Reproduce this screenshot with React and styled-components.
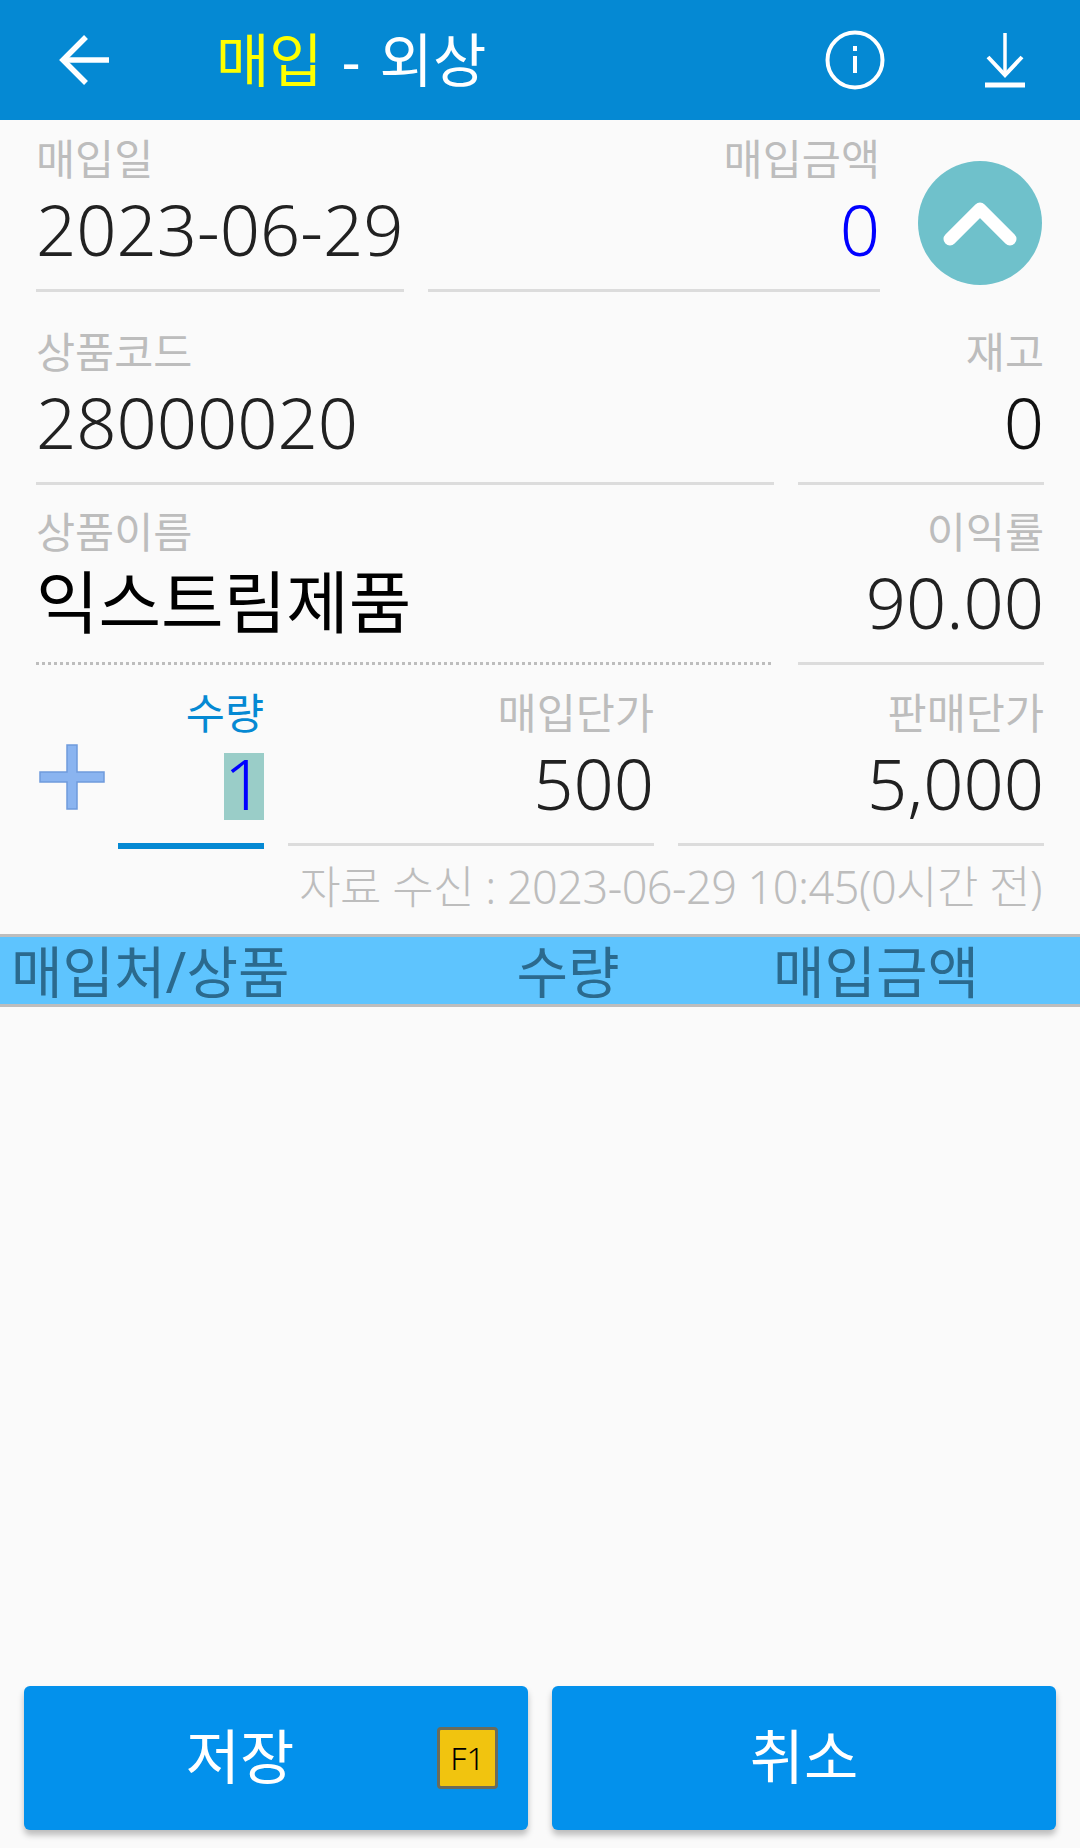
import styled, { createGlobalStyle } from "styled-components";

const GlobalStyle = createGlobalStyle`
  html, body {
    margin: 0;
    padding: 0;
    background: #fafafa;
  }

  body {
    font-family: "Noto Sans", "Noto Sans CJK KR", sans-serif;
  }
`;

const Page = styled.div`
  width: 1080px;
  height: 1848px;
  display: flex;
  flex-direction: column;
  background: #fafafa;
  overflow: hidden;
`;

const Header = styled.header`
  height: 120px;
  flex: none;
  display: flex;
  align-items: center;
  background: #0589d3;
  padding-left: 59px;
`;

const BackButton = styled.div`
  width: 52px;
  height: 52px;
  display: flex;
`;

const Title = styled.h1`
  margin: 0 0 0 105px;
  flex: 1;
  font-size: 58px;
  font-weight: 400;
  line-height: 120px;
  height: 120px;
  word-spacing: 4px;
  color: #fff;
`;

const TitleAccent = styled.span`
  color: #ffff00;
`;

const HeaderIcon = styled.div`
  width: 60px;
  height: 60px;
  display: flex;
  margin-right: ${(p) => p.$right}px;
`;

const Row = styled.div`
  display: flex;
  flex: none;
  gap: 24px;
  padding-left: 36px;
  margin-top: ${(p) => p.$top}px;
`;

const Field = styled.div`
  width: ${(p) => p.$width}px;
  height: ${(p) => p.$height || 160}px;
  display: flex;
  flex-direction: column;
  flex: none;
  box-sizing: border-box;
  margin-left: ${(p) => p.$offset || 0}px;
  border-bottom: ${(p) => {
    if (p.$line === "dotted") return "3px dotted #bdbdbd";
    if (p.$line === "active") return "6px solid #0589d3";
    return "3px solid #dcdcdc";
  }};
  text-align: ${(p) => (p.$left ? "left" : "right")};
`;

const Label = styled.div`
  height: 50px;
  font-size: 42.5px;
  line-height: 53px;
  color: ${(p) => (p.$active ? "#0589d3" : "#bdbdbd")};
`;

const Value = styled.div`
  height: 94px;
  font-size: ${(p) => p.$size || 70.5}px;
  font-weight: ${(p) => p.$weight || 300};
  line-height: 94px;
  white-space: nowrap;
  color: ${(p) => p.$color || "#212121"};
`;

const Selected = styled.span`
  display: inline-block;
  height: 67px;
  width: 40px;
  margin-bottom: 9px;
  line-height: 60px;
  vertical-align: middle;
  text-align: center;
  background: #9acdc8;
`;

const CollapseButton = styled.div`
  width: 124px;
  height: 124px;
  flex: none;
  margin: 29px 0 0 14px;
  border-radius: 50%;
  background: #6fc1cb;
  display: flex;
  align-items: center;
  justify-content: center;
`;

const PlusBox = styled.div`
  width: 66px;
  height: 66px;
  flex: none;
  margin: 58px -11px 0 3px;
`;

const SyncInfo = styled.div`
  flex: none;
  height: 60px;
  margin-top: 8px;
  padding-right: 38px;
  text-align: right;
  font-size: 45px;
  font-weight: 300;
  line-height: 60px;
  letter-spacing: -0.5px;
  color: #bdbdbd;
  white-space: nowrap;
`;

const TableHead = styled.div`
  flex: none;
  height: 73px;
  box-sizing: border-box;
  margin-top: 17px;
  display: grid;
  grid-template-columns: 460px 216px 400px;
  align-items: center;
  background: #5ec4fe;
  border-top: 3px solid #bdbdbd;
  border-bottom: 3px solid #bdbdbd;
  font-size: 56px;
  line-height: 60px;
  color: #2b6a8e;
`;

const HeadCell = styled.div`
  text-align: ${(p) => (p.$left ? "left" : "center")};
  padding-left: ${(p) => (p.$left ? 11 : 0)}px;
  white-space: nowrap;
`;

const ListArea = styled.div`
  flex: 1;
`;

const Footer = styled.footer`
  flex: none;
  display: flex;
  gap: 24px;
  padding: 0 24px 18px;
`;

const ActionButton = styled.div`
  position: relative;
  width: 504px;
  height: 144px;
  flex: none;
  box-sizing: border-box;
  padding-right: ${(p) => p.$shift || 0}px;
  border-radius: 6px;
  background: #0391ec;
  box-shadow: 0 5px 6px rgba(0, 0, 0, 0.25);
  color: #fff;
  font-size: 59px;
  line-height: 140px;
  text-align: center;
`;

const KeyBadge = styled.span`
  position: absolute;
  left: 413px;
  top: 41px;
  width: 61px;
  height: 62px;
  box-sizing: border-box;
  border: 3px solid #6b6b5a;
  border-radius: 4px;
  background: #f1c40f;
  color: #000;
  font-size: 32px;
  font-weight: 300;
  line-height: 56px;
  text-align: center;
`;

const App = () => {
  return (
    <>
      <GlobalStyle />
      <Page>
        <Header>
          <BackButton>
            <svg width="52" height="52" viewBox="0 0 52 52" fill="none" stroke="#fff" strokeWidth="5.5">
              <path d="M50 26H5" />
              <path d="M27 3L4 26l23 23" />
            </svg>
          </BackButton>
          <Title>
            <TitleAccent>매입</TitleAccent> - 외상
          </Title>
          <HeaderIcon $right={90}>
            <svg width="60" height="60" viewBox="0 0 60 60" fill="none" stroke="#fff">
              <circle cx="30" cy="30" r="27.5" strokeWidth="4" />
              <path d="M30 26v17" strokeWidth="4" />
              <path d="M30 16v5" strokeWidth="4" />
            </svg>
          </HeaderIcon>
          <HeaderIcon $right={45}>
            <svg width="60" height="60" viewBox="0 0 60 60" fill="none" stroke="#fff">
              <path d="M30 3v42" strokeWidth="3.5" />
              <path d="M13 27l17 18 17-18" strokeWidth="4" />
              <path d="M10 55h40" strokeWidth="5" />
            </svg>
          </HeaderIcon>
        </Header>

        <Row $top={12}>
          <Field $width={368} $left>
            <Label>매입일</Label>
            <Value>2023-06-29</Value>
          </Field>
          <Field $width={452}>
            <Label>매입금액</Label>
            <Value $color="#0000ff">0</Value>
          </Field>
          <CollapseButton>
            <svg width="74" height="46" viewBox="0 0 74 46" fill="none" stroke="#fff" strokeWidth="13" strokeLinecap="round" strokeLinejoin="round">
              <path d="M7 39L37 9l30 30" />
            </svg>
          </CollapseButton>
        </Row>

        <Row $top={33}>
          <Field $width={738} $left>
            <Label>상품코드</Label>
            <Value>28000020</Value>
          </Field>
          <Field $width={246}>
            <Label>재고</Label>
            <Value $color="#111">0</Value>
          </Field>
        </Row>

        <Row $top={20}>
          <Field $width={735} $left $line="dotted">
            <Label>상품이름</Label>
            <Value $color="#000" $weight={400} $size={68}>익스트림제품</Value>
          </Field>
          <Field $width={246} $offset={3}>
            <Label>이익률</Label>
            <Value>90.00</Value>
          </Field>
        </Row>

        <Row $top={21}>
          <PlusBox>
            <svg width="66" height="66" viewBox="0 0 66 66" fill="#8ab4f0" stroke="#6f9adc" strokeWidth="1.5">
              <path d="M28 1h10v27h27v10H38v27H28V38H1V28h27z" />
            </svg>
          </PlusBox>
          <Field $width={146} $line="active" $height={163}>
            <Label $active>수량</Label>
            <Value $color="#0000ff">
              <Selected>1</Selected>
            </Value>
          </Field>
          <Field $width={366}>
            <Label>매입단가</Label>
            <Value>500</Value>
          </Field>
          <Field $width={366}>
            <Label>판매단가</Label>
            <Value>5,000</Value>
          </Field>
        </Row>

        <SyncInfo>자료 수신 : 2023-06-29 10:45(0시간 전)</SyncInfo>

        <TableHead>
          <HeadCell $left>매입처/상품</HeadCell>
          <HeadCell>수량</HeadCell>
          <HeadCell>매입금액</HeadCell>
        </TableHead>

        <ListArea />

        <Footer>
          <ActionButton $shift={72}>
            저장
            <KeyBadge>F1</KeyBadge>
          </ActionButton>
          <ActionButton>취소</ActionButton>
        </Footer>
      </Page>
    </>
  );
};

export default App;
